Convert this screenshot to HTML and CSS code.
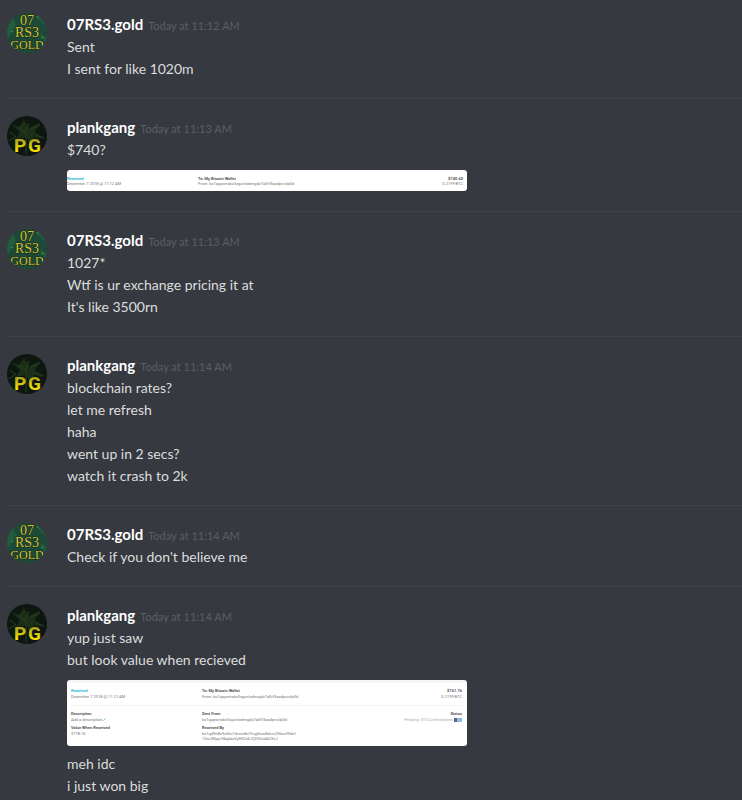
FILE: index.html
```html
<!DOCTYPE html>
<html lang="en">
<head>
    <meta charset="UTF-8">
    <meta name="viewport" content="width=device-width, initial-scale=1.0">
    <title>Chat</title>
    <link rel="stylesheet" href="styles.css">
</head>
<body>
    <!-- avatars, reused by every message group -->
    <svg class="sprites" aria-hidden="true">
        <defs>
            <clipPath id="round"><circle cx="20" cy="20" r="20"/></clipPath>
            <linearGradient id="yellow" x1="0" y1="0" x2="0" y2="1">
                <stop offset="0.2" stop-color="#a8a020"/>
                <stop offset="0.8" stop-color="#ffe600"/>
            </linearGradient>
        </defs>
        <symbol id="gold" viewBox="0 0 40 40">
            <g clip-path="url(#round)">
                <rect width="40" height="40" fill="#1d4a38"/>
                <path d="M0 27L9 12L4 0H0zM29 0l2 6 9 9V0zM32 20l8 4v9z" fill="#215c3c"/>
                <path d="M30 3l1 2M4 18l2 1M34 25l2-1" stroke="#439b3e"/>
                <g class="gold-text" text-anchor="middle">
                    <text x="20" y="12" font-size="14">07</text>
                    <text x="20" y="24" font-size="14">RS3</text>
                    <text x="20" y="36" font-size="12">GOLD</text>
                </g>
            </g>
        </symbol>
        <symbol id="plank" viewBox="0 0 40 40">
            <g clip-path="url(#round)">
                <rect width="40" height="40" fill="#0d160f"/>
                <path d="M4 8l8 3 5-7 5 8 11-5-5 9 8 7-9-2-3 8-5-8-10 2 4-7z" fill="#1b2e18"/>
                <path d="M2 25l7-5M12 11l6 6 4-10M24 13l9-4M30 19l7 3M19 18v20M3 16l6 5" stroke="#29421d" fill="none"/>
                <text class="plank-text" x="7" y="36">P</text>
                <text class="plank-text" x="21" y="36">G</text>
            </g>
        </symbol>
    </svg>

    <main class="chat">
        <section class="group">
            <svg class="avatar"><use href="#gold"/></svg>
            <div class="messages">
                <h2 class="header"><span class="name">07RS3.gold</span><time class="time">Today at 11:12 AM</time></h2>
                <p class="text">Sent</p>
                <p class="text">I sent for like 1020m</p>
            </div>
        </section>

        <section class="group">
            <svg class="avatar"><use href="#plank"/></svg>
            <div class="messages">
                <h2 class="header"><span class="name">plankgang</span><time class="time">Today at 11:13 AM</time></h2>
                <p class="text">$740?</p>
                <div class="attachment small">
                    <div class="row">
                        <div class="cell"><b class="received">Received</b><span>December 7 2018 @ 11:12 AM</span></div>
                        <div class="cell"><b>To: My Bitcoin Wallet</b><span>From: bc1qapwnskz3zgunlxdengdz7a0ff3aadprvclp0d</span></div>
                        <div class="cell right"><b>$740.60</b><span>0.2199 BTC</span></div>
                    </div>
                </div>
            </div>
        </section>

        <section class="group">
            <svg class="avatar"><use href="#gold"/></svg>
            <div class="messages">
                <h2 class="header"><span class="name">07RS3.gold</span><time class="time">Today at 11:13 AM</time></h2>
                <p class="text">1027*</p>
                <p class="text">Wtf is ur exchange pricing it at</p>
                <p class="text">It's like 3500rn</p>
            </div>
        </section>

        <section class="group">
            <svg class="avatar"><use href="#plank"/></svg>
            <div class="messages">
                <h2 class="header"><span class="name">plankgang</span><time class="time">Today at 11:14 AM</time></h2>
                <p class="text">blockchain rates?</p>
                <p class="text">let me refresh</p>
                <p class="text">haha</p>
                <p class="text">went up in 2 secs?</p>
                <p class="text">watch it crash to 2k</p>
            </div>
        </section>

        <section class="group">
            <svg class="avatar"><use href="#gold"/></svg>
            <div class="messages">
                <h2 class="header"><span class="name">07RS3.gold</span><time class="time">Today at 11:14 AM</time></h2>
                <p class="text">Check if you don't believe me</p>
            </div>
        </section>

        <section class="group">
            <svg class="avatar"><use href="#plank"/></svg>
            <div class="messages">
                <h2 class="header"><span class="name">plankgang</span><time class="time">Today at 11:14 AM</time></h2>
                <p class="text">yup just saw</p>
                <p class="text">but look value when recieved</p>
                <div class="attachment large">
                    <div class="row">
                        <div class="cell"><b class="received">Received</b><span>December 7 2018 @ 11:12 AM</span></div>
                        <div class="cell"><b>To: My Bitcoin Wallet</b><span>From: bc1qapwnskz3zgunlxdengdz7a0ff3aadprvclp0d</span></div>
                        <div class="cell right"><b>$761.76</b><span>0.2199 BTC</span></div>
                    </div>
                    <div class="row details">
                        <div class="cell">
                            <b>Description</b>
                            <span>Add a description <svg class="pencil" viewBox="0 0 4 4"><path d="M0 4L3 1"/></svg></span>
                            <b class="second">Value When Received</b>
                            <span>$778.16</span>
                        </div>
                        <div class="cell">
                            <b>Sent From</b>
                            <span>bc1qapwnskz3zgunlxdengdz7a0ff3aadprvclp0d</span>
                            <b class="second">Received By</b>
                            <span>bc1qd9n8s9uf6u7dvsm8c7fugt6cw8drm206ec39dcf<br>13wJMyqrYAqdacVyHQ2dLZjS5VudACExJ</span>
                        </div>
                        <div class="cell right">
                            <b>Status</b>
                            <span class="pending">Pending: 0/3 Confirmations <i class="badge"></i></span>
                        </div>
                    </div>
                </div>
                <p class="text">meh idc</p>
                <p class="text">i just won big</p>
            </div>
        </section>
    </main>
</body>
</html>
```
FILE: styles.css
```css
body {
    margin: 0;
    background-color: #36393f;
    color: #dcddde;
    font-family: Lato, sans-serif;
    font-size: 14px;
    line-height: 22px;
}

.sprites {
    position: absolute;
    width: 0;
    height: 0;
}

.chat {
    padding: 13px 0 0 7px;
}

.group {
    display: flex;
    gap: 20px;
    padding-bottom: 18px;
}

.group + .group {
    padding-top: 17px;
    border-top: 1px solid #3e4147;
}

.group:last-child {
    padding-bottom: 0;
}

.avatar {
    flex: none;
    width: 40px;
    height: 40px;
}

.messages {
    flex: 1;
    min-width: 0;
}

.header {
    display: flex;
    align-items: baseline;
    gap: 5px;
    margin: 0;
    line-height: 16px;
}

.name {
    color: #fff;
    font-size: 15px;
    font-weight: 700;
    line-height: 22px;
}

.time {
    color: #5b5e64;
    font-size: 11px;
    font-weight: 400;
}

.text {
    margin: 0;
}

.header + .text {
    margin-top: 1px;
}

/* avatar lettering */
.gold-text {
    font-family: "Liberation Serif", serif;
    fill: #dcc038;
    stroke: #102c17;
    stroke-width: 1;
    paint-order: stroke;
}

.plank-text {
    font-family: Roboto, sans-serif;
    font-size: 19px;
    font-weight: 700;
    fill: url(#yellow);
}

/* wallet previews */
.attachment {
    box-sizing: border-box;
    max-width: 400px;
    margin: 9px 0 2px;
    border-radius: 3px;
    background-color: #fff;
    color: #777;
    font-family: Roboto, sans-serif;
    font-size: 4px;
    line-height: 6px;
    overflow: hidden;
}

.attachment + .text {
    margin-top: 7px;
}

.small {
    height: 21px;
    padding: 6px 4px 0 0;
    line-height: 5px;
}

.large {
    height: 66px;
    padding: 5px 5px 0 4px;
    border-top: 3px solid #f5f6f7;
}

.row {
    display: grid;
    grid-template-columns: 131px 1fr auto;
}

.details {
    margin-top: 5px;
    padding-top: 5px;
    border-top: 1px solid #f4f4f4;
}

.cell {
    display: flex;
    flex-direction: column;
}

.cell b {
    color: #555;
}

.cell .received {
    color: #22b8cf;
}

.right {
    text-align: right;
}

.second {
    margin-top: 2px;
}

.second + span {
    line-height: 5px;
}

.pending {
    color: #aaa;
}

.pencil {
    width: 4px;
    height: 4px;
    fill: none;
    stroke: #22b8cf;
    stroke-width: 0.6;
}

.badge {
    display: inline-block;
    box-sizing: border-box;
    width: 8px;
    height: 4px;
    border-left: 3px solid #667;
    background-color: #8bbce8;
    vertical-align: middle;
}
```
